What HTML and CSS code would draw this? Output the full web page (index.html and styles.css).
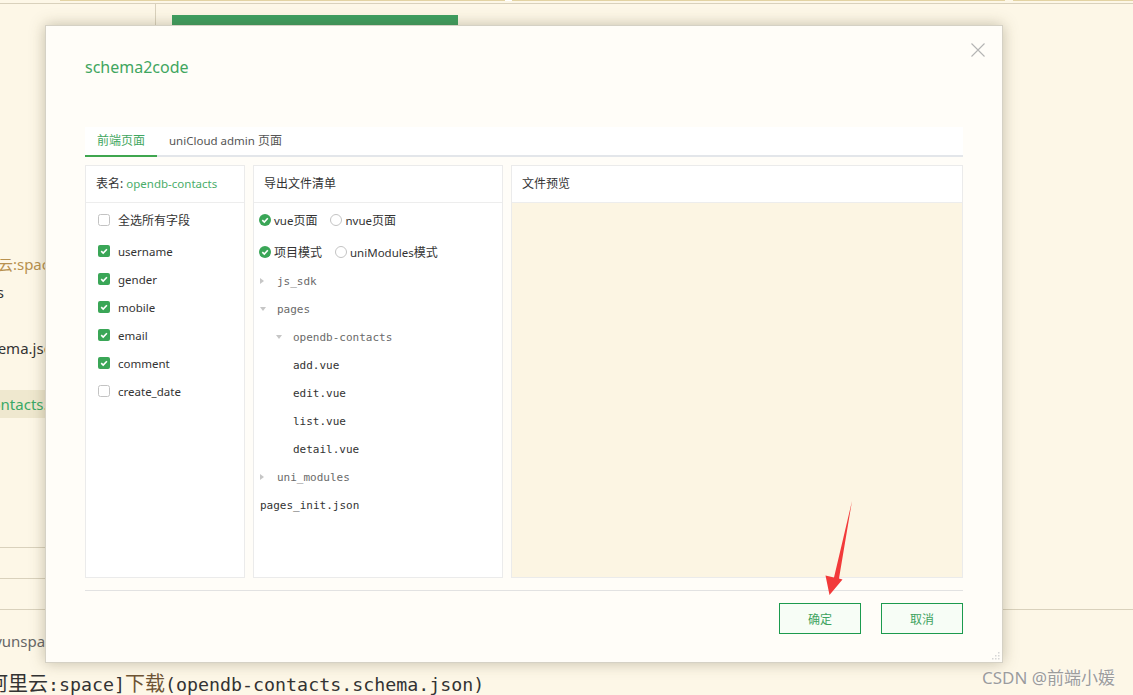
FILE: index.html
```html
<!DOCTYPE html>
<html lang="zh-CN">
<head>
<meta charset="utf-8">
<title>schema2code</title>
<link rel="stylesheet" href="styles.css">
</head>
<body>
<div class="page">
  <div class="topstrip">
    <span class="ts ts1"></span><span class="ts ts2"></span><span class="ts ts3"></span><span class="ts ts4"></span><span class="ts ts5"></span>
  </div>
  <div class="workspace">
    <aside class="sidebar">
      <div class="sb-row sb-env"><span class="sb-text off-env">[阿里云:space]</span></div>
      <div class="sb-row sb-end"><span class="sb-text">cloudfunctions</span></div>
      <div class="sb-row"><span class="sb-text"></span></div>
      <div class="sb-row"><span class="sb-text off-schema">schema.json</span></div>
      <div class="sb-row"><span class="sb-text"></span></div>
      <div class="sb-row sb-active"><span class="sb-text off-contacts">opendb-contacts.schema.json</span></div>
      <div class="sb-bottom">
        <div class="sb-bar"></div>
        <div class="sb-bar"></div>
      </div>
    </aside>
    <main class="editor">
      <div class="green-btn"></div>
    </main>
  </div>
  <div class="console">
    <div class="log log-gray"><span class="off-yun">aliyunspace</span></div>
    <div class="log log-main"><span class="cjk off-ali">阿里云</span><span class="mono">:space]</span><span class="cjk dl">下载</span><span class="mono">(opendb-contacts.schema.json)</span></div>
  </div>
</div>

<div class="dialog">
  <div class="dlg-head">
    <div class="dlg-title">schema2code</div>
    <svg class="dlg-close" width="14" height="14" viewBox="0 0 14 14"><path d="M0.5 0.5 L13.5 13.5 M13.5 0.5 L0.5 13.5" stroke="#b4b4b4" stroke-width="1.1" fill="none"/></svg>
  </div>

  <div class="tabs">
    <div class="tab active">前端页面</div>
    <div class="tab"><span class="lat">uniCloud admin</span> 页面</div>
  </div>

  <div class="panels">
    <section class="panel p-left">
      <div class="p-head">表名: <span class="green lat">opendb-contacts</span></div>
      <div class="p-body fields">
        <label class="field all">
          <svg class="cb" width="12" height="12" viewBox="0 0 12 12"><rect x="0.5" y="0.5" width="11" height="11" rx="2" fill="#fff" stroke="#c3c3c3"/></svg>
          <span>全选所有字段</span>
        </label>
        <div class="field-list">
          <label class="field">
            <svg class="cb" width="12" height="12" viewBox="0 0 12 12"><rect width="12" height="12" rx="2" fill="#3aa657"/><path d="M3.2 6.2 L5.2 8.1 L8.9 4.2" stroke="#fff" stroke-width="1.6" fill="none"/></svg>
            <span class="lat">username</span>
          </label>
          <label class="field">
            <svg class="cb" width="12" height="12" viewBox="0 0 12 12"><rect width="12" height="12" rx="2" fill="#3aa657"/><path d="M3.2 6.2 L5.2 8.1 L8.9 4.2" stroke="#fff" stroke-width="1.6" fill="none"/></svg>
            <span class="lat">gender</span>
          </label>
          <label class="field">
            <svg class="cb" width="12" height="12" viewBox="0 0 12 12"><rect width="12" height="12" rx="2" fill="#3aa657"/><path d="M3.2 6.2 L5.2 8.1 L8.9 4.2" stroke="#fff" stroke-width="1.6" fill="none"/></svg>
            <span class="lat">mobile</span>
          </label>
          <label class="field">
            <svg class="cb" width="12" height="12" viewBox="0 0 12 12"><rect width="12" height="12" rx="2" fill="#3aa657"/><path d="M3.2 6.2 L5.2 8.1 L8.9 4.2" stroke="#fff" stroke-width="1.6" fill="none"/></svg>
            <span class="lat">email</span>
          </label>
          <label class="field">
            <svg class="cb" width="12" height="12" viewBox="0 0 12 12"><rect width="12" height="12" rx="2" fill="#3aa657"/><path d="M3.2 6.2 L5.2 8.1 L8.9 4.2" stroke="#fff" stroke-width="1.6" fill="none"/></svg>
            <span class="lat">comment</span>
          </label>
          <label class="field">
            <svg class="cb" width="12" height="12" viewBox="0 0 12 12"><rect x="0.5" y="0.5" width="11" height="11" rx="2" fill="#fff" stroke="#c3c3c3"/></svg>
            <span class="lat">create_date</span>
          </label>
        </div>
      </div>
    </section>

    <section class="panel p-mid">
      <div class="p-head">导出文件清单</div>
      <div class="p-body">
        <div class="radio-row r1">
          <label class="opt"><svg class="rd" width="12" height="12" viewBox="0 0 12 12"><circle cx="6" cy="6" r="6" fill="#3aa657"/><path d="M3.3 6.1 L5.3 8 L8.8 4.3" stroke="#fff" stroke-width="1.6" fill="none"/></svg><span><span class="lat">vue</span>页面</span></label>
          <label class="opt"><svg class="rd" width="12" height="12" viewBox="0 0 12 12"><circle cx="6" cy="6" r="5.5" fill="#fff" stroke="#c3c3c3"/></svg><span><span class="lat">nvue</span>页面</span></label>
        </div>
        <div class="radio-row r2">
          <label class="opt"><svg class="rd" width="12" height="12" viewBox="0 0 12 12"><circle cx="6" cy="6" r="6" fill="#3aa657"/><path d="M3.3 6.1 L5.3 8 L8.8 4.3" stroke="#fff" stroke-width="1.6" fill="none"/></svg><span>项目模式</span></label>
          <label class="opt"><svg class="rd" width="12" height="12" viewBox="0 0 12 12"><circle cx="6" cy="6" r="5.5" fill="#fff" stroke="#c3c3c3"/></svg><span><span class="lat">uniModules</span>模式</span></label>
        </div>
        <ul class="tree">
          <li class="node folder l0"><i class="tri closed"></i>js_sdk</li>
          <li class="node folder l0"><i class="tri open"></i>pages</li>
          <li class="node folder l1"><i class="tri open"></i>opendb-contacts</li>
          <li class="node file l2">add.vue</li>
          <li class="node file l2">edit.vue</li>
          <li class="node file l2">list.vue</li>
          <li class="node file l2">detail.vue</li>
          <li class="node folder l0"><i class="tri closed"></i>uni_modules</li>
          <li class="node file l0">pages_init.json</li>
        </ul>
      </div>
    </section>

    <section class="panel p-right">
      <div class="p-head">文件预览</div>
      <div class="p-body preview"></div>
    </section>
  </div>

  <div class="dlg-foot">
    <button class="btn">确定</button>
    <button class="btn">取消</button>
  </div>

  <svg class="grip" width="9" height="9" viewBox="0 0 9 9">
    <rect x="7" y="1" width="1.5" height="1.5" fill="#d6d6d6"/>
    <rect x="4" y="4" width="1.5" height="1.5" fill="#d6d6d6"/>
    <rect x="7" y="4" width="1.5" height="1.5" fill="#d6d6d6"/>
    <rect x="1" y="7" width="1.5" height="1.5" fill="#d6d6d6"/>
    <rect x="4" y="7" width="1.5" height="1.5" fill="#d6d6d6"/>
    <rect x="7" y="7" width="1.5" height="1.5" fill="#d6d6d6"/>
  </svg>
</div>

<svg class="arrow" width="1133" height="695" viewBox="0 0 1133 695">
  <polygon points="852,501 839,578.5 842.5,579.5 829.5,595 825.5,575.5 834,577.5" fill="#f23a3a"/>
</svg>

<div class="watermark">CSDN @前端小媛</div>
</body>
</html>
```

FILE: styles.css
```css
* { box-sizing: border-box; }
html, body { margin: 0; padding: 0; }
body {
  width: 1133px;
  height: 695px;
  overflow: hidden;
  position: relative;
  background: #fdf7e7;
  color: #333;
  font-family: "Noto Sans", "Noto Sans CJK SC", sans-serif;
}

/* ---------- background IDE ---------- */
.page { display: flex; flex-direction: column; height: 695px; }

.topstrip {
  height: 4px;
  display: flex;
  align-items: flex-start;
  border-bottom: 1px solid #d9d1bc;
}
.ts { display: block; height: 1px; }
.ts1 { width: 60px; }
.ts2 { width: 445px; background: #e3d3a3; }
.ts3 { width: 7px; background: #ffffff; }
.ts4 { width: 493px; background: #e3d3a3; }
.ts5 { flex: 1; margin-left: 8px; background: #e3d3a3; }

.workspace { display: flex; flex: 1; min-height: 0; }

.sidebar {
  width: 156px;
  border-right: 1px solid #d9d1bc;
  display: flex;
  flex-direction: column;
  padding-top: 246px;
  overflow: hidden;
  font-size: 15px;
}
.sb-row {
  height: 28px;
  line-height: 28px;
  white-space: nowrap;
  display: flex;
}
.sb-end { width: 4px; justify-content: flex-end; }
.sb-text { display: block; flex: none; }
.sb-env { color: #b8914f; }
.off-env { margin-left: -37px; }
.off-schema { margin-left: -26px; }
.off-contacts { margin-left: -75px; }
.sb-active { background: #efe8cf; color: #3aa866; }

.sb-bottom { margin-top: auto; }
.sb-bar { height: 31px; border-top: 1px solid #d9d1bc; }

.editor { flex: 1; padding: 11px 0 0 16px; }
.green-btn { width: 286px; height: 30px; background: #3d9f60; }

.console {
  height: 86px;
  border-top: 1px solid #d9d1bc;
  overflow: hidden;
}
.log { white-space: nowrap; line-height: 22px; }
.log-gray { margin-top: 20px; font-size: 15px; color: #666; }
.off-yun { display: inline-block; margin-left: -22px; }
.log-main { margin-top: 20px; color: #333; }
.cjk { font-family: "Noto Sans CJK SC", sans-serif; font-size: 20px; }
.off-ali { display: inline-block; margin-left: -12px; }
.dl { color: #6e5434; }
.mono { font-family: "DejaVu Sans Mono", monospace; font-size: 18.3px; }

/* ---------- dialog ---------- */
.dialog {
  position: absolute;
  left: 45px;
  top: 25px;
  width: 958px;
  height: 638px;
  background: #fffdf8;
  border: 1px solid #d5d1c5;
  box-shadow: 0 0 14px rgba(90, 80, 50, 0.35);
  padding: 0 39px 28px;
  display: flex;
  flex-direction: column;
}

.lat { font-size: 11.5px; }

.dlg-head {
  height: 101px;
  display: flex;
  justify-content: space-between;
  align-items: flex-start;
}
.dlg-title {
  margin-top: 29px;
  line-height: 24px;
  font-size: 16px;
  color: #3fa660;
}
.dlg-close { margin-top: 17px; margin-right: -22px; }

.tabs {
  height: 30px;
  background: #fff;
  display: flex;
  border-bottom: 2px solid #e3e6ea;
}
.tab {
  padding: 0 12px;
  line-height: 28px;
  font-size: 12px;
  color: #555;
}
.tab.active {
  color: #3fa660;
  border-bottom: 2px solid #3fa64f;
  margin-bottom: -2px;
  height: 30px;
}

.panels {
  margin-top: 8px;
  height: 413px;
  display: flex;
  gap: 8px;
}
.panel {
  border: 1px solid #ebebeb;
  background: #fff;
  display: flex;
  flex-direction: column;
}
.p-left { width: 160px; }
.p-mid { width: 250px; }
.p-right { flex: 1; }
.p-head {
  height: 37px;
  line-height: 36px;
  border-bottom: 1px solid #ededed;
  padding-left: 10px;
  font-size: 12px;
  color: #333;
  background: #fff;
}
.green { color: #4aad6a; }
.p-body { flex: 1; }
.preview { background: #fcf5e3; }

.fields { padding-top: 2px; }
.field {
  display: flex;
  align-items: center;
  height: 28px;
  padding-left: 12px;
  font-size: 12px;
  color: #333;
}
.field.all { height: 30px; }
.field-list { margin-top: 2px; }
.cb { margin-right: 8px; flex: none; }

.radio-row {
  display: flex;
  align-items: center;
  padding-left: 5px;
  font-size: 12px;
  color: #333;
}
.r1 { height: 32px; margin-top: 1px; }
.r2 { height: 31px; }
.opt { display: flex; align-items: center; margin-right: 13px; }
.rd { margin-right: 3px; flex: none; }

.tree {
  list-style: none;
  margin: 0;
  padding: 0;
  font-family: "DejaVu Sans Mono", monospace;
  font-size: 11px;
}
.node {
  height: 28px;
  display: flex;
  align-items: center;
  white-space: nowrap;
}
.folder { color: #6a6a6a; }
.file { color: #333; }
.node.l0 { padding-left: 6px; }
.node.l1 { padding-left: 22px; }
.node.l2 { padding-left: 39px; }
.tri { display: block; width: 17px; height: 7px; position: relative; flex: none; }
.tri::before { content: ""; position: absolute; left: 0; width: 0; height: 0; }
.tri.closed::before {
  top: 0;
  border-top: 3.5px solid transparent;
  border-bottom: 3.5px solid transparent;
  border-left: 4px solid #c6c6c6;
}
.tri.open::before {
  top: 1px;
  border-left: 3.5px solid transparent;
  border-right: 3.5px solid transparent;
  border-top: 4px solid #c6c6c6;
}

.dlg-foot {
  margin-top: 12px;
  border-top: 1px solid #e2e2e2;
  padding-top: 12px;
  display: flex;
  justify-content: flex-end;
  gap: 20px;
}
.btn {
  width: 82px;
  height: 31px;
  border: 1px solid #1c9a4e;
  background: #f7fdf6;
  color: #3da35f;
  font-family: "Noto Sans CJK SC", sans-serif;
  font-size: 12px;
  padding: 0;
}

.grip { position: absolute; right: 2px; bottom: 2px; }

/* ---------- overlays ---------- */
.arrow { position: absolute; left: 0; top: 0; pointer-events: none; }

.watermark {
  position: absolute;
  left: 982px;
  top: 666px;
  font-size: 17px;
  line-height: 24px;
  color: #9c9c9c;
  text-shadow: 0 0 2px #fff;
  white-space: nowrap;
}
```
